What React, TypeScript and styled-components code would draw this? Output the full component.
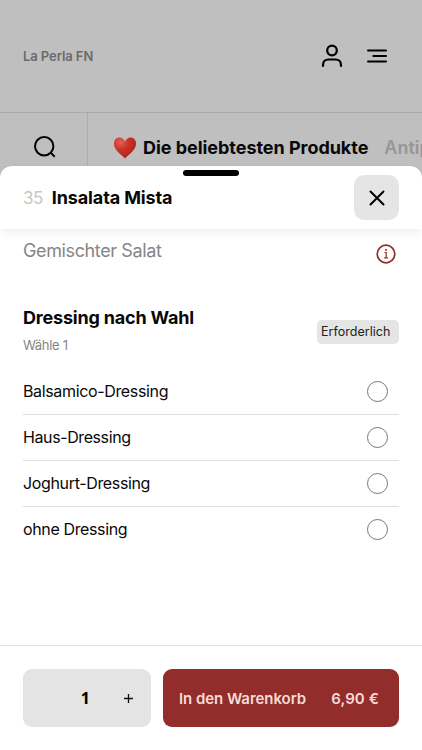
import React from "react";
import styled, { createGlobalStyle } from "styled-components";

const Global = createGlobalStyle`
  * { box-sizing: border-box; }
  html, body { margin: 0; background: #bfbfbf; }
  body { font-family: Inter, "Liberation Sans", sans-serif; overflow: hidden; }
  button { border: 0; padding: 0; font: inherit; }
  svg { display: block; flex: none; }
`;

const Screen = styled.div`
  position: relative;
  width: 422px;
  height: 750px;
  overflow: hidden;
  background: #bfbfbf;
`;

const ShopHeader = styled.header`
  height: 113px;
  padding: 0 34px 0 23px;
  display: flex;
  align-items: center;
  border-bottom: 1px solid #a9a9a9;
`;

const Label = styled.span<{ $size: number; $weight?: number; $color?: string; $spacing?: number }>`
  font-size: ${(p) => p.$size}px;
  font-weight: ${(p) => p.$weight ?? 400};
  color: ${(p) => p.$color ?? "#080808"};
  letter-spacing: ${(p) => p.$spacing ?? 0}px;
  line-height: 24px;
  white-space: nowrap;
`;

const HeaderIcons = styled.div`
  margin-left: auto;
  display: flex;
  align-items: center;
  gap: 22px;
`;

const CategoryBar = styled.nav`
  display: flex;
  height: 72px;
`;

const SearchCell = styled.div`
  flex: none;
  width: 88px;
  padding: 22px 0 0 33px;
  border-right: 1px solid #adadad;
`;

const Categories = styled.div`
  display: flex;
  align-items: flex-start;
  padding: 23px 0 0 25px;
`;

const HeartBox = styled.span`
  flex: none;
  width: 30px;
`;

const NextCategory = styled.div`
  margin-left: 16px;
  line-height: 24px;
`;

const Sheet = styled.section`
  position: absolute;
  inset: 166px 0 0;
  display: flex;
  flex-direction: column;
  background: #fff;
  border-radius: 12px 12px 0 0;
`;

const DragHandle = styled.div`
  position: absolute;
  top: 4px;
  left: 183px;
  width: 56px;
  height: 6px;
  border-radius: 3px;
  background: #000;
`;

const SheetHeader = styled.div`
  height: 63px;
  flex: none;
  padding: 0 23px;
  display: flex;
  align-items: center;
  gap: 9px;
  border-radius: 12px 12px 0 0;
  box-shadow: 0 4px 12px -1px rgba(0, 0, 0, 0.075);
`;

const CloseButton = styled.button`
  width: 45px;
  height: 45px;
  margin-left: auto;
  display: grid;
  place-items: center;
  border-radius: 10px;
  background: #e5e5e5;
`;

const Description = styled.div`
  height: 50px;
  padding: 10px 26px 0 23px;
  display: flex;
  justify-content: space-between;
`;

const InfoBox = styled.div`
  padding-top: 5px;
`;

const GroupHeader = styled.div`
  padding: 27px 23px 0;
  height: 89px;
  display: flex;
  justify-content: space-between;
`;

const GroupTitles = styled.div`
  display: flex;
  flex-direction: column;
  gap: 3px;
`;

const Badge = styled.div`
  width: 82px;
  height: 24px;
  margin-top: 14px;
  padding-left: 4px;
  display: flex;
  align-items: center;
  border-radius: 5px;
  background: #e5e5e5;
`;

const Options = styled.ul`
  list-style: none;
  margin: 0 23px;
  padding: 0;
`;

const Option = styled.li`
  height: 46px;
  padding-right: 11px;
  display: flex;
  align-items: center;
  justify-content: space-between;
  & + & { border-top: 1px solid #dedede; }
  & + & > :first-child { padding-bottom: 2px; }
`;

const Radio = styled.span`
  width: 21px;
  height: 21px;
  border: 1px solid #777;
  border-radius: 50%;
`;

const OrderBar = styled.footer`
  margin-top: auto;
  height: 105px;
  flex: none;
  padding: 23px 23px 0;
  display: flex;
  gap: 12px;
  border-top: 1px solid #e2e2e2;
`;

const Quantity = styled.div`
  width: 128px;
  height: 58px;
  padding-right: 18px;
  display: flex;
  align-items: center;
  justify-content: flex-end;
  gap: 34px;
  border-radius: 9px;
  background: #e4e4e4;
`;

const Amount = styled.span`
  font: 700 16px/24px "Noto Sans", sans-serif;
`;

const AddButton = styled.button`
  width: 236px;
  height: 58px;
  padding: 1px 20px 0 16px;
  display: flex;
  align-items: center;
  justify-content: space-between;
  border-radius: 9px;
  background: #932d2b;
`;

const HeartIcon = () => (
  <svg width="24" height="24" viewBox="0 0 24 24">
    <defs>
      <radialGradient id="heart" cx="30%" cy="22%" r="80%">
        <stop offset="0" stopColor="#df6257" />
        <stop offset=".45" stopColor="#cc322a" />
        <stop offset="1" stopColor="#a8261f" />
      </radialGradient>
    </defs>
    <path fill="url(#heart)" d="M12 22.5C8.7 18.5 1 14.5 1 7.7C1 4 3.2 1.5 6.4 1.5C9 1.5 11.1 3.2 12 5.5C12.9 3.2 15 1.5 17.6 1.5C20.8 1.5 23 4 23 7.7C23 14.5 15.3 18.5 12 22.5Z" />
  </svg>
);

const choices = [
  { name: "Balsamico-Dressing", spacing: -0.35 },
  { name: "Haus-Dressing", spacing: -0.4 },
  { name: "Joghurt-Dressing", spacing: -0.35 },
  { name: "ohne Dressing", spacing: -0.37 },
];

export default function App() {
  return (
    <Screen>
      <Global />
      <ShopHeader>
        <Label $size={13} $weight={600} $color="#6a6a6a" $spacing={-0.08}>La Perla FN</Label>
        <HeaderIcons>
          <svg width="24" height="26" viewBox="0 0 24 26" fill="none" stroke="#000" strokeWidth="2.2" strokeLinecap="round">
            <circle cx="12" cy="7.5" r="4.8" />
            <path d="M3 23v-1c0-3.6 2.2-5.5 5.7-5.5h6.6c3.5 0 5.7 1.9 5.7 5.5v1" />
          </svg>
          <svg width="22" height="16" viewBox="0 0 22 16" fill="none" stroke="#000" strokeWidth="2" strokeLinecap="round">
            <path d="M2 2.4h18M7.3 8h12.7M2 13.6h18" />
          </svg>
        </HeaderIcons>
      </ShopHeader>
      <CategoryBar>
        <SearchCell>
          <svg width="24" height="24" viewBox="0 0 24 24" fill="none" stroke="#000" strokeWidth="2">
            <circle cx="11.2" cy="11.2" r="9.2" />
            <path d="m17.4 17.4 4.3 4.3" />
          </svg>
        </SearchCell>
        <Categories>
          <HeartBox><HeartIcon /></HeartBox>
          <Label $size={18} $weight={700} $spacing={-0.04}>Die beliebtesten Produkte</Label>
          <NextCategory><Label $size={18} $weight={600} $color="#969696">Antipasti</Label></NextCategory>
        </Categories>
      </CategoryBar>
      <Sheet>
        <SheetHeader>
          <Label $size={17} $color="#c6c6c6" $spacing={-0.5}>35</Label>
          <Label $size={18} $weight={700} $spacing={-0.13}>Insalata Mista</Label>
          <CloseButton aria-label="Schließen">
            <svg width="18" height="18" viewBox="0 0 18 18" fill="none" stroke="#000" strokeWidth="2" strokeLinecap="round">
              <path d="m2.5 2.5 13 13m0-13-13 13" />
            </svg>
          </CloseButton>
        </SheetHeader>
        <DragHandle />
        <Description>
          <Label $size={18} $color="#868686" $spacing={-0.38}>Gemischter Salat</Label>
          <InfoBox>
            <svg width="20" height="20" viewBox="0 0 20 20" fill="none" stroke="#932d2b">
              <circle cx="10" cy="10" r="8.8" strokeWidth="1.7" />
              <path d="M8.4 8.5h1.8v5.2M8.2 13.8h3.8" strokeWidth="1.2" />
              <circle cx="10" cy="5.9" r="1" fill="#932d2b" stroke="none" />
            </svg>
          </InfoBox>
        </Description>
        <GroupHeader>
          <GroupTitles>
            <Label $size={18} $weight={700} $spacing={-0.19}>Dressing nach Wahl</Label>
            <Label $size={13} $color="#858585" $spacing={-0.3}>Wähle 1</Label>
          </GroupTitles>
          <Badge><Label $size={12.5} $color="#222" $spacing={0.03}>Erforderlich</Label></Badge>
        </GroupHeader>
        <Options>
          {choices.map(({ name, spacing }) => (
            <Option key={name}>
              <Label $size={16} $spacing={spacing}>{name}</Label>
              <Radio />
            </Option>
          ))}
        </Options>
        <OrderBar>
          <Quantity>
            <Amount>1</Amount>
            <svg width="9" height="10" viewBox="0 0 9 10" stroke="#111" strokeWidth="1.3">
              <path d="M0 5.5h9M4.5 1v9" />
            </svg>
          </Quantity>
          <AddButton>
            <Label $size={15} $weight={600} $color="#f6dcd5" $spacing={-0.05}>In den Warenkorb</Label>
            <Label $size={15} $weight={600} $color="#f6dcd5" $spacing={0.1}>6,90 €</Label>
          </AddButton>
        </OrderBar>
      </Sheet>
    </Screen>
  );
}
